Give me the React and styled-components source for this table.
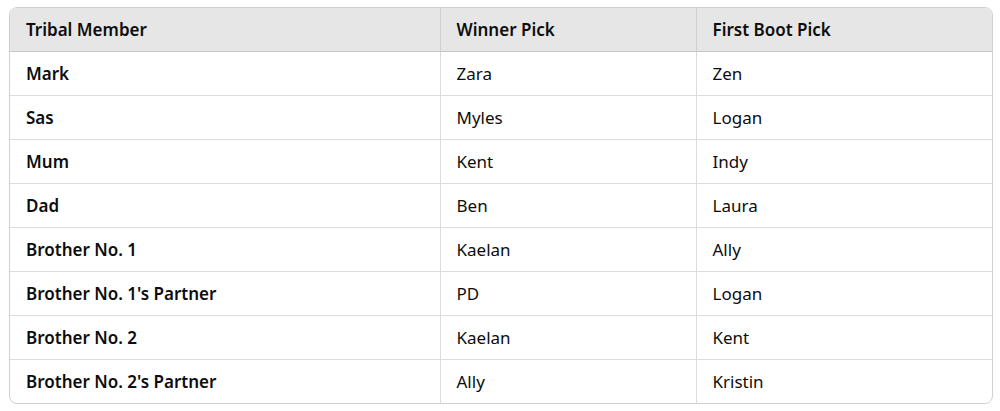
import styled, { createGlobalStyle } from "styled-components";

const GlobalStyle = createGlobalStyle`
  body {
    margin: 0;
    background: #ffffff;
    font-family: "Noto Sans", "Open Sans", sans-serif;
  }
`;

const rows = [
  ["Mark", "Zara", "Zen"],
  ["Sas", "Myles", "Logan"],
  ["Mum", "Kent", "Indy"],
  ["Dad", "Ben", "Laura"],
  ["Brother No. 1", "Kaelan", "Ally"],
  ["Brother No. 1's Partner", "PD", "Logan"],
  ["Brother No. 2", "Kaelan", "Kent"],
  ["Brother No. 2's Partner", "Ally", "Kristin"],
];

const App = () => {
  return (
    <Page>
      <GlobalStyle />
      <TableWrap>
        <Table>
          <colgroup>
            <col style={{ width: 430 }} />
            <col style={{ width: 256 }} />
            <col />
          </colgroup>
          <thead>
            <tr>
              <Th>Tribal Member</Th>
              <Th>Winner Pick</Th>
              <Th>First Boot Pick</Th>
            </tr>
          </thead>
          <tbody>
            {rows.map((r) => (
              <Row key={r[0]}>
                <Td $bold>{r[0]}</Td>
                <Td>{r[1]}</Td>
                <Td>{r[2]}</Td>
              </Row>
            ))}
          </tbody>
        </Table>
      </TableWrap>
    </Page>
  );
};

export default App;

const Page = styled.div`
  padding: 7px 9px 0 9px;
`;

const TableWrap = styled.div`
  width: 982px;
  border: 1px solid #d0d0d0;
  border-radius: 8px;
  overflow: hidden;
`;

const Table = styled.table`
  width: 100%;
  border-collapse: collapse;
  table-layout: fixed;
  color: #0d0d0d;
  font-size: 17px;
`;

const Th = styled.th`
  height: 43px;
  padding: 0 16px;
  text-align: left;
  font-weight: 600;
  background: #e6e6e6;
  border-bottom: 1px solid #c6c6c6;
  border-left: 1px solid #d0d0d0;
  &:first-child {
    border-left: none;
  }
`;

const Row = styled.tr`
  &:not(:last-child) td {
    border-bottom: 1px solid #dcdcdc;
  }
`;

const Td = styled.td`
  height: 43px;
  padding: 0 16px;
  font-weight: ${(p) => (p.$bold ? 600 : 400)};
  border-left: 1px solid #dcdcdc;
  &:first-child {
    border-left: none;
  }
`;
